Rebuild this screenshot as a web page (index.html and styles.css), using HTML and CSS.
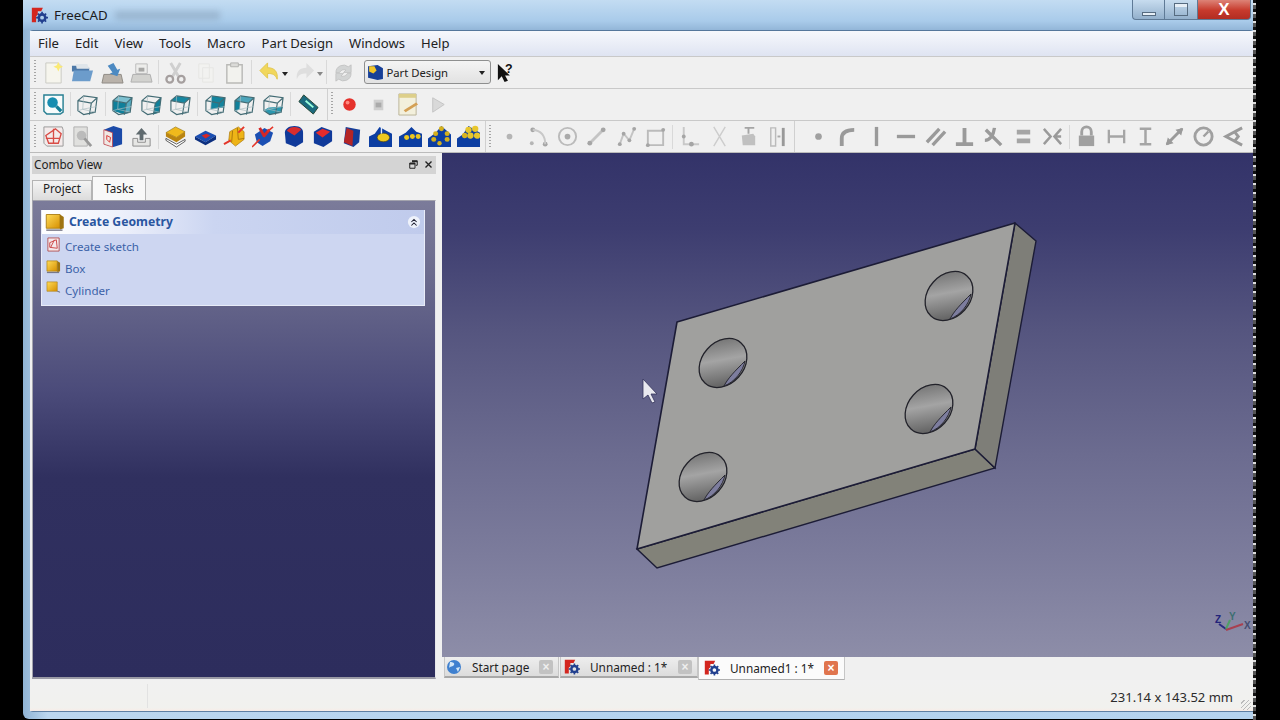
FILE: index.html
```html
<!DOCTYPE html>
<html lang="en">
<head>
<meta charset="utf-8">
<title>FreeCAD</title>
<link rel="stylesheet" href="styles.css">
</head>
<body>
<svg class="sprite" xmlns="http://www.w3.org/2000/svg">
<defs>
<linearGradient id="holeGrad" x1="0" y1="1" x2="1" y2="0">
<stop offset="0" stop-color="#4a4a4a"/><stop offset=".55" stop-color="#a4a4a4"/><stop offset="1" stop-color="#626262"/>
</linearGradient>
<linearGradient id="yel" x1="0" y1="0" x2="1" y2="1"><stop offset="0" stop-color="#ffdc5a"/><stop offset="1" stop-color="#d68f00"/></linearGradient>
<symbol id="fc" viewBox="0 0 20 20"><path d="M1 1h13l-2 4H8v4l-2 2v7H1z" fill="#d3261f"/><circle cx="13" cy="12.500" r="3.800" fill="none" stroke="#22408f" stroke-width="3"/><path d="M13 5.500v2.500M13 17v2.500M6 12.500h2.500M17.500 12.500h2.500M8.200 7.700l1.700 1.700M16.100 15.600l1.700 1.700M17.800 7.700l-1.700 1.700M9.900 15.600l-1.700 1.700" stroke="#22408f" stroke-width="2"/></symbol>
<symbol id="new" viewBox="0 0 24 24"><path d="M4 2h13l3 3v18H4z" fill="#f8f7ec" stroke="#bdbdb5"/><path d="M17 1l1.500 3.500L22 6l-3.500 1.500L17 11l-1.500-3.500L12 6l3.500-1.500z" fill="#ffe84a"/></symbol>
<symbol id="open" viewBox="0 0 24 24"><path d="M1 5h8l2 2h8v4H1z" fill="#4d79a8"/><path d="M5 3h12l2 5H6z" fill="#dfe5ea"/><path d="M1 21l2-11h20l-3 11z" fill="#6c9ccb"/></symbol>
<symbol id="save" viewBox="0 0 24 24"><path d="M3 14h18l2 9H1z" fill="#b9b2aa" stroke="#8e8a84"/><path d="M7 5l6-3 4 7 3-1-3 8-8-3 3-1z" fill="#4d8ac2"/></symbol>
<symbol id="saveas" viewBox="0 0 24 24"><path d="M3 14h18l2 8H1z" fill="#c9c9c4" stroke="#999"/><path d="M6 3h12v10H6z" fill="#ececea" stroke="#aaa"/><path d="M9 7h6v4H9z" fill="#8f8f8c"/></symbol>
<symbol id="cut" viewBox="0 0 24 24"><path d="M7 2l8 14M17 2L9 16" stroke="#c4c4c4" stroke-width="3"/><circle cx="6" cy="19" r="3.500" fill="none" stroke="#8d8584" stroke-width="2.400"/><circle cx="18" cy="19" r="3.500" fill="none" stroke="#8d8584" stroke-width="2.400"/></symbol>
<symbol id="copy" viewBox="0 0 24 24"><path d="M5 3h11v15H5zM9 7h11v15H9z" fill="#f2f2f0" stroke="#e6e6e4"/></symbol>
<symbol id="paste" viewBox="0 0 24 24"><path d="M4 4h16v19H4z" fill="#f3f3ee" stroke="#a8a8a4" stroke-width="1.500"/><path d="M8 2h8v4H8z" fill="#d4d4d0" stroke="#a0a09c"/></symbol>
<symbol id="undo" viewBox="0 0 24 24"><path d="M2 10l8-8v5c7 0 11 4 10 12-2-5-5-6-10-6v5z" fill="#f1d75c" stroke="#e2c74e"/></symbol>
<symbol id="redo" viewBox="0 0 24 24"><path d="M22 10l-8-8v5C7 7 3 11 4 19c2-5 5-6 10-6v5z" fill="#dedede"/></symbol>
<symbol id="caret" viewBox="0 0 8 8"><path d="M1 2h6L4 6z" fill="#222"/></symbol>
<symbol id="caretg" viewBox="0 0 8 8"><path d="M1 2h6L4 6z" fill="#888"/></symbol>
<symbol id="refresh" viewBox="0 0 24 24"><path d="M4 12a8 8 0 0 1 13-6l3-2v8h-8l2.500-2.500A5 5 0 0 0 8 12zM20 13a8 8 0 0 1-13 6l-3 2v-8h8l-2.500 2.500A5 5 0 0 0 16 13z" fill="#d2d4d4" stroke="#b5b5b5" stroke-width=".6"/></symbol>
<symbol id="pd" viewBox="0 0 16 16"><path d="M1 2l9-1 5 3v10l-5 1-9-2z" fill="#173f97"/><path d="M2 2h5l2 4-3 3-4-2z" fill="#f2c528"/></symbol>
<symbol id="help" viewBox="0 0 24 24"><path d="M3 3v17l4-4 3 6 3.500-1.500-3-5.500h5z" fill="#111"/><text x="10.500" y="12" font-size="13" font-weight="700" fill="#111" font-family="Liberation Sans">?</text></symbol>
<symbol id="fit" viewBox="0 0 24 24"><path d="M2 2h20v18l-3 2H5l-3-3z" fill="#f7fbfb" stroke="#277f92" stroke-width="1.500"/><circle cx="11" cy="10" r="5.500" fill="#178db0"/><path d="M15 14l5 5" stroke="#167e97" stroke-width="3.500"/></symbol>
<symbol id="cube" viewBox="0 0 24 24"><path d="M2 8l6-5 14 2-2 15-12 2.500-6-4zM2 8l14 2.500 6-5.500M16 10.500l-2 12" fill="none" stroke="#426b74" stroke-width="1.200"/><path d="M8 3l-1 14-5 1.500M7 17l13 3M7 17l15-3" fill="none" stroke="#a9bcc0" stroke-width=".7"/></symbol>
<symbol id="cfront" viewBox="0 0 24 24"><path d="M2 8l14 2.500-2 12-12-4z" fill="#0f809b"/><path d="M16 10.500l6-5.500-2 15-6 2.500z" fill="#54abc0"/><path d="M2 8l6-5 14 2-6 5.500z" fill="#7cc0d0"/><use href="#cube"/></symbol>
<symbol id="ctop" viewBox="0 0 24 24"><path d="M2 8l6-5 14 2-6 5.500z" fill="#1687a1"/><use href="#cube"/></symbol>
<symbol id="cright" viewBox="0 0 24 24"><path d="M16 10.500l6-5.500-2 15-6 2.500z" fill="#0f809b"/><use href="#cube"/></symbol>
<symbol id="crear" viewBox="0 0 24 24"><path d="M8 3l14 2-1 10-14 2z" fill="#14849e"/><use href="#cube"/></symbol>
<symbol id="cleft" viewBox="0 0 24 24"><path d="M2 8l6-5-1 14-5 2z" fill="#0f809b"/><path d="M8 3l14 2-6 5.500L2 8z" fill="#4ca4ba"/><use href="#cube"/></symbol>
<symbol id="cbottom" viewBox="0 0 24 24"><path d="M2 18l5-3 15-1-2 6-12 2.500z" fill="#2a97ae"/><use href="#cube"/></symbol>
<symbol id="measure" viewBox="0 0 24 24"><path d="M7 2l15 13-5 7L2 9z" fill="#1b6a7e" stroke="#243"/><path d="M9 8l8 7" stroke="#9fd" stroke-width="2"/></symbol>
<symbol id="rec" viewBox="0 0 24 24"><circle cx="12" cy="12" r="6.500" fill="#e5322c"/><circle cx="10" cy="10" r="2" fill="#ff8a80"/></symbol>
<symbol id="stop" viewBox="0 0 24 24"><path d="M7 7h10v11H7z" fill="#cfcfcf"/><path d="M9 10h6v5H9z" fill="#aaa"/></symbol>
<symbol id="macro" viewBox="0 0 24 24"><path d="M3 1h18v22H3z" fill="#f3f0dc" stroke="#bbb49a"/><path d="M3 1h18v4H3z" fill="#ddcf8a"/><path d="M8 18L21 10l2 2-13 8z" fill="#d4a055"/></symbol>
<symbol id="play" viewBox="0 0 24 24"><path d="M7 5l12 7-12 8z" fill="#d9d9d9" stroke="#c4c4c4"/></symbol>
<symbol id="sketch" viewBox="0 0 24 24"><path d="M2 2h19l1 3v17H5l-3-3z" fill="#f3ebeb" stroke="#999"/><path d="M4 11l10-7 6 5-3 10H7zM12 4v15M4 14h14" fill="none" stroke="#d84c46" stroke-width="1.400"/></symbol>
<symbol id="sketch2" viewBox="0 0 24 24"><path d="M3 2h14v20H3z" fill="#e0e0de" stroke="#b0b0b0"/><circle cx="11" cy="11" r="5" fill="#bbb"/><path d="M14 14l7 8" stroke="#999" stroke-width="3"/></symbol>
<symbol id="map" viewBox="0 0 24 24"><path d="M3 5l10-4 9 3v16l-9 3-10-3z" fill="#1b4aa8"/><path d="M3 5l9 3v15l-9-3z" fill="#efe8e4" stroke="#c33" stroke-width=".7"/><path d="M6 11l4 2-1 5-3-3z" fill="none" stroke="#d33"/></symbol>
<symbol id="upload" viewBox="0 0 24 24"><path d="M3 14v8h18v-8h-5v4H8v-4z" fill="#e6e6e4" stroke="#8b8b8b"/><path d="M12 3l6 7h-4v6h-4v-6H6z" fill="#5f6a6e"/></symbol>
<symbol id="pad" viewBox="0 0 24 24"><path d="M2 8l10-6 10 5-9 6z" fill="#f0b91c" stroke="#8a6a08" stroke-width=".6"/><path d="M2 8v4l11 6 9-6V7l-9 6z" fill="#ba8410"/><path d="M2 14l11 6 9-5v2l-9 6-11-7z" fill="#fff" stroke="#333" stroke-width=".8"/></symbol>
<symbol id="pocket" viewBox="0 0 24 24"><path d="M1 12l11-6 11 5-11 7z" fill="#1b4fb3"/><path d="M1 12v3l11 6 11-6v-4l-11 7z" fill="#0c2f7f"/><path d="M8 11l5-2 4 2-5 3z" fill="#d42727"/></symbol>
<symbol id="rev" viewBox="0 0 24 24"><path d="M7 7l9-5 6 5v8l-9 7-7-6z" fill="#eeb416" stroke="#a9780c" stroke-width=".7"/><path d="M15 3l1 12 6-1M10 6l-1 12" fill="none" stroke="#a9780c"/><path d="M1 20l7-4M16 8l6-6" stroke="#e4362a" stroke-width="2"/></symbol>
<symbol id="groove" viewBox="0 0 24 24"><path d="M3 10l10-7 9 5-3 9-8 5-6-4z" fill="#1b4fb3"/><path d="M8 3l5 9M18 5l-6 7" stroke="#d42727" stroke-width="3"/><path d="M0 23l8-8M16 7l6-5" stroke="#e4362a" stroke-width="1.600"/></symbol>
<symbol id="fillet" viewBox="0 0 24 24"><path d="M3 8c0-4 4-7 10-7s9 3 9 7v10l-8 5-10-4z" fill="#103a9a"/><path d="M5 6c2-3 5-4 8-4s6 1 7 3l-7 6z" fill="#d92d2d"/></symbol>
<symbol id="chamfer" viewBox="0 0 24 24"><path d="M3 7l8-5 11 4v11l-9 6-10-4z" fill="#103a9a"/><path d="M5 8l7-4 8 3-8 6z" fill="#e62b2b"/></symbol>
<symbol id="draft" viewBox="0 0 24 24"><path d="M6 2l15 3-1 13-6 5-10-4z" fill="#143d98"/><path d="M7 3l7 3-1 16-9-4z" fill="#b52525"/></symbol>
<symbol id="mirror" viewBox="0 0 24 24"><path d="M0 12l6-3 5-7 7 4 6 3v14H0z" fill="#0c3ea2"/><ellipse cx="15" cy="13" rx="6.500" ry="4.500" fill="#ecc81f" stroke="#4a4010" stroke-width=".7"/><path d="M13 2v7" stroke="#e8eef8" stroke-width="1.400"/></symbol>
<symbol id="lin" viewBox="0 0 24 24"><path d="M0 12l7-4 6-6 5 5 6 2v14H0z" fill="#0c3ea2"/><circle cx="8" cy="13" r="2.600" fill="#ecc81f"/><circle cx="14" cy="12" r="2.600" fill="#ecc81f"/><circle cx="20" cy="12" r="2.600" fill="#ecc81f"/></symbol>
<symbol id="polar" viewBox="0 0 24 24"><path d="M0 14l8-6 6-7 10 9v13H0z" fill="#0c3ea2"/><circle cx="14" cy="4" r="2.600" fill="#d4b01c"/><circle cx="8" cy="9" r="2.600" fill="#d4b01c"/><circle cx="20" cy="9" r="2.600" fill="#d4b01c"/><circle cx="6" cy="15" r="2.600" fill="#d4b01c"/><circle cx="20" cy="15" r="2.600" fill="#d4b01c"/><circle cx="12" cy="19" r="2.300" fill="#d4b01c"/></symbol>
<symbol id="multi" viewBox="0 0 24 24"><path d="M0 14l6-4 6-9 12 7v15H0z" fill="#0c3ea2"/><circle cx="12" cy="5" r="3.300" fill="#e8c62c"/><circle cx="19" cy="4" r="3.300" fill="#e8c62c"/><circle cx="21" cy="11" r="3.300" fill="#e8c62c"/><circle cx="14" cy="11" r="3.300" fill="#e8c62c"/><circle cx="8" cy="11" r="2.800" fill="#d9b420"/></symbol>
<symbol id="gpoint" viewBox="0 0 24 24"><circle cx="12" cy="12" r="3" fill="#b5b5b5"/></symbol>
<symbol id="gfillet" viewBox="0 0 24 24"><circle cx="6" cy="5" r="2.500" fill="#a5a5a5"/><circle cx="19" cy="20" r="2.500" fill="#a5a5a5"/><circle cx="5" cy="19" r="2" fill="#b5b5b5"/><path d="M6 5c9 1 13 6 13 15" fill="none" stroke="#c8c8c8" stroke-width="2"/></symbol>
<symbol id="gcircle" viewBox="0 0 24 24"><circle cx="12" cy="12" r="9" fill="none" stroke="#bbb" stroke-width="2"/><circle cx="12" cy="12" r="3" fill="#aaa"/></symbol>
<symbol id="gline" viewBox="0 0 24 24"><path d="M5 19L19 5" stroke="#c4c4c4" stroke-width="3"/><circle cx="5" cy="19" r="2.500" fill="#a5a5a5"/><circle cx="19" cy="5" r="2.500" fill="#a5a5a5"/></symbol>
<symbol id="gpoly" viewBox="0 0 24 24"><path d="M5 20l4-11 6 7 5-12" fill="none" stroke="#c4c4c4" stroke-width="2"/><circle cx="5" cy="20" r="2" fill="#a5a5a5"/><circle cx="9" cy="9" r="2" fill="#a5a5a5"/><circle cx="15" cy="16" r="2" fill="#a5a5a5"/><circle cx="20" cy="4" r="2" fill="#a5a5a5"/></symbol>
<symbol id="grect" viewBox="0 0 24 24"><path d="M4 6h16v15H4z" fill="none" stroke="#bbb" stroke-width="2"/><circle cx="4" cy="21" r="2" fill="#a5a5a5"/><circle cx="20" cy="5" r="2" fill="#a5a5a5"/></symbol>
<symbol id="gcorner" viewBox="0 0 24 24"><path d="M6 2v18h16" fill="none" stroke="#c8c8c8" stroke-width="2"/><circle cx="6" cy="12" r="2" fill="#a5a5a5"/><circle cx="14" cy="20" r="2.500" fill="#a5a5a5"/></symbol>
<symbol id="gtrim" viewBox="0 0 24 24"><path d="M6 2l12 20M18 2L6 22" stroke="#cdcdcd" stroke-width="1.500"/></symbol>
<symbol id="gext" viewBox="0 0 24 24"><path d="M5 11l12-2 2 3v9H6z" fill="#c0c0c0"/><path d="M12 9V3M8 3h10" stroke="#a5a5a5" stroke-width="2"/></symbol>
<symbol id="gsym" viewBox="0 0 24 24"><path d="M5 3v19h5V3z" fill="none" stroke="#bbb" stroke-width="1.500"/><path d="M18 3v19" stroke="#999" stroke-width="3"/><path d="M12 12h3" stroke="#aaa" stroke-width="2"/></symbol>
<symbol id="kpoint" viewBox="0 0 24 24"><circle cx="12" cy="12" r="3.500" fill="#a0a0a0"/></symbol>
<symbol id="karc" viewBox="0 0 24 24"><path d="M6 22v-8c0-6 4-9 13-9" fill="none" stroke="#9a9a9a" stroke-width="4"/></symbol>
<symbol id="kvert" viewBox="0 0 24 24"><path d="M12 2v20" stroke="#9a9a9a" stroke-width="3.500"/></symbol>
<symbol id="khoriz" viewBox="0 0 24 24"><path d="M3 12h19" stroke="#9a9a9a" stroke-width="3.500"/></symbol>
<symbol id="kpar" viewBox="0 0 24 24"><path d="M3 18L16 4M9 21L22 7" stroke="#9a9a9a" stroke-width="3.500"/></symbol>
<symbol id="kperp" viewBox="0 0 24 24"><path d="M12 3v17M3 20h18" stroke="#9a9a9a" stroke-width="4"/></symbol>
<symbol id="ktan" viewBox="0 0 24 24"><path d="M4 5l16 16M3 16c5 0 9-5 10-13" fill="none" stroke="#9a9a9a" stroke-width="3.500"/></symbol>
<symbol id="keq" viewBox="0 0 24 24"><path d="M5 5h14v5H5zM5 14h14v5H5z" fill="#a5a5a5"/></symbol>
<symbol id="ksym" viewBox="0 0 24 24"><path d="M3 4l7 8-7 8M21 4l-7 8 7 8M14 12h7" fill="none" stroke="#9a9a9a" stroke-width="2.600"/></symbol>
<symbol id="klock" viewBox="0 0 24 24"><path d="M4 11h16v11H4z" fill="#a0a0a0"/><path d="M7 11V7a5 5 0 0 1 10 0v4" fill="none" stroke="#a0a0a0" stroke-width="3"/></symbol>
<symbol id="kh" viewBox="0 0 24 24"><path d="M4 5v14M20 5v14M4 12h16" stroke="#a5a5a5" stroke-width="2.400"/></symbol>
<symbol id="kv" viewBox="0 0 24 24"><path d="M6 4h12M6 20h12M12 4v16" stroke="#a5a5a5" stroke-width="2.600"/></symbol>
<symbol id="kdist" viewBox="0 0 24 24"><path d="M4 20L20 4" stroke="#9a9a9a" stroke-width="3"/><path d="M3 21l2-8 6 6zM21 3l-2 8-6-6z" fill="#9a9a9a"/></symbol>
<symbol id="kradius" viewBox="0 0 24 24"><circle cx="12" cy="12" r="9" fill="none" stroke="#a0a0a0" stroke-width="3"/><path d="M12 12l5-5" stroke="#a0a0a0" stroke-width="2.500"/></symbol>
<symbol id="kangle" viewBox="0 0 24 24"><path d="M21 3L4 12l17 9M13 7l4 5-4 5" fill="none" stroke="#9a9a9a" stroke-width="3"/></symbol>
<symbol id="box" viewBox="0 0 16 16"><path d="M1 2h11v11H1z" fill="url(#yel)" stroke="#a87a10" stroke-width=".7"/><path d="M12 2l3 2v9l-3 1z" fill="#9f7410"/><path d="M1 14.500h13" stroke="#667" stroke-width="1"/></symbol>
<symbol id="cyl" viewBox="0 0 16 16"><path d="M1 2h11v10H1z" fill="url(#yel)" stroke="#a87a10" stroke-width=".6"/><path d="M12 12l3 1" stroke="#667"/></symbol>
<symbol id="csk" viewBox="0 0 16 16"><path d="M2 1h12v14H2z" fill="#f4e8ea" stroke="#a33" stroke-width=".8"/><path d="M4 6l7-3 1 9-8-1zM9 3L5 11" fill="none" stroke="#cc4444"/></symbol>
<symbol id="globe" viewBox="0 0 16 16"><circle cx="8" cy="8" r="7" fill="#3f80cf"/><path d="M4 3c3 0 5 1 4 3S4 7 3 9zM10 9l4-1-2 5z" fill="#d3e7f7"/></symbol>
<symbol id="collapse" viewBox="0 0 16 16"><circle cx="8" cy="8" r="7" fill="#eef2fb"/><path d="M5 8l3-3 3 3M5 12l3-3 3 3" fill="none" stroke="#223" stroke-width="1.200"/></symbol>
<symbol id="float" viewBox="0 0 12 12"><path d="M4 1h7v6H9M1 4h7v7H1z" fill="none" stroke="#222" stroke-width="1.300"/><path d="M4 1h7v2H4zM1 4h7v2H1z" fill="#222"/></symbol>
<symbol id="closex" viewBox="0 0 12 12"><path d="M2 2l8 8M10 2l-8 8" stroke="#222" stroke-width="1.800"/></symbol>
</defs>
</svg>

<div class="shell">
  <div class="window">
    <header class="titlebar">
      <svg class="ti"><use href="#fc"/></svg>
      <span class="ttext">FreeCAD</span>
      <span class="smudge"></span>
      <div class="wbtns">
        <span class="wb min"><i></i></span>
        <span class="wb max"><i></i></span>
        <span class="wb cls">X</span>
      </div>
    </header>
    <div class="client">
      <nav class="menubar">
        <span>File</span><span>Edit</span><span>View</span><span>Tools</span><span>Macro</span><span>Part Design</span><span>Windows</span><span>Help</span>
      </nav>
      <div class="toolbar">
        <i class="grip"></i>
        <b class="t f"><svg><use href="#new"/></svg></b>
        <b class="t"><svg><use href="#open"/></svg></b>
        <b class="t"><svg><use href="#save"/></svg></b>
        <b class="t f"><svg><use href="#saveas"/></svg></b>
        <i class="sep"></i>
        <b class="t f"><svg><use href="#cut"/></svg></b>
        <b class="t"><svg><use href="#copy"/></svg></b>
        <b class="t f"><svg><use href="#paste"/></svg></b>
        <i class="sep"></i>
        <b class="t u"><svg><use href="#undo"/></svg></b><svg class="car"><use href="#caret"/></svg>
        <b class="t u"><svg><use href="#redo"/></svg></b><svg class="car"><use href="#caretg"/></svg>
        <i class="sep s2"></i>
        <b class="t"><svg><use href="#refresh"/></svg></b>
        <div class="combo"><svg><use href="#pd"/></svg><span>Part Design</span><svg class="car c2"><use href="#caret"/></svg></div>
        <b class="t"><svg><use href="#help"/></svg></b>
      </div>
      <div class="toolbar">
        <i class="grip"></i>
        <b class="t"><svg><use href="#fit"/></svg></b>
        <i class="sep"></i>
        <b class="t"><svg><use href="#cube"/></svg></b>
        <i class="sep"></i>
        <b class="t"><svg><use href="#cfront"/></svg></b>
        <b class="t"><svg><use href="#cright"/></svg></b>
        <b class="t"><svg><use href="#ctop"/></svg></b>
        <i class="sep"></i>
        <b class="t"><svg><use href="#crear"/></svg></b>
        <b class="t"><svg><use href="#cleft"/></svg></b>
        <b class="t"><svg><use href="#cbottom"/></svg></b>
        <i class="sep"></i>
        <b class="t"><svg><use href="#measure"/></svg></b>
        <i class="brk b1"></i><i class="grip g2"></i>
        <b class="t"><svg><use href="#rec"/></svg></b>
        <b class="t"><svg><use href="#stop"/></svg></b>
        <b class="t"><svg><use href="#macro"/></svg></b>
        <b class="t"><svg><use href="#play"/></svg></b>
      </div>
      <div class="toolbar last">
        <i class="grip"></i>
        <b class="t"><svg><use href="#sketch"/></svg></b>
        <b class="t"><svg><use href="#sketch2"/></svg></b>
        <b class="t"><svg><use href="#map"/></svg></b>
        <b class="t"><svg><use href="#upload"/></svg></b>
        <i class="sep"></i>
        <b class="t"><svg><use href="#pad"/></svg></b>
        <b class="t"><svg><use href="#pocket"/></svg></b>
        <b class="t"><svg><use href="#rev"/></svg></b>
        <b class="t"><svg><use href="#groove"/></svg></b>
        <b class="t"><svg><use href="#fillet"/></svg></b>
        <b class="t"><svg><use href="#chamfer"/></svg></b>
        <b class="t"><svg><use href="#draft"/></svg></b>
        <b class="t"><svg><use href="#mirror"/></svg></b>
        <b class="t"><svg><use href="#lin"/></svg></b>
        <b class="t"><svg><use href="#polar"/></svg></b>
        <b class="t"><svg><use href="#multi"/></svg></b>
        <i class="brk"></i><i class="grip g3"></i>
        <b class="t"><svg><use href="#gpoint"/></svg></b>
        <b class="t"><svg><use href="#gfillet"/></svg></b>
        <b class="t"><svg><use href="#gcircle"/></svg></b>
        <b class="t"><svg><use href="#gline"/></svg></b>
        <b class="t"><svg><use href="#gpoly"/></svg></b>
        <b class="t"><svg><use href="#grect"/></svg></b>
        <i class="sep"></i>
        <b class="t"><svg><use href="#gcorner"/></svg></b>
        <b class="t"><svg><use href="#gtrim"/></svg></b>
        <b class="t"><svg><use href="#gext"/></svg></b>
        <b class="t"><svg><use href="#gsym"/></svg></b>
        <i class="brk b3"></i>
        <b class="t"><svg><use href="#kpoint"/></svg></b>
        <b class="t"><svg><use href="#karc"/></svg></b>
        <b class="t"><svg><use href="#kvert"/></svg></b>
        <b class="t"><svg><use href="#khoriz"/></svg></b>
        <b class="t"><svg><use href="#kpar"/></svg></b>
        <b class="t"><svg><use href="#kperp"/></svg></b>
        <b class="t"><svg><use href="#ktan"/></svg></b>
        <b class="t"><svg><use href="#keq"/></svg></b>
        <b class="t"><svg><use href="#ksym"/></svg></b>
        <i class="sep"></i>
        <b class="t"><svg><use href="#klock"/></svg></b>
        <b class="t"><svg><use href="#kh"/></svg></b>
        <b class="t"><svg><use href="#kv"/></svg></b>
        <b class="t"><svg><use href="#kdist"/></svg></b>
        <b class="t"><svg><use href="#kradius"/></svg></b>
        <b class="t"><svg><use href="#kangle"/></svg></b>
      </div>
      <div class="main">
        <aside class="dock">
          <div class="dtitle"><span>Combo View</span><svg class="float"><use href="#float"/></svg><svg class="dx"><use href="#closex"/></svg></div>
          <div class="dtabs"><span class="dtab">Project</span><span class="dtab on">Tasks</span></div>
          <div class="dpanel">
            <section class="task">
              <div class="thead"><svg class="tbig"><use href="#box"/></svg><strong>Create Geometry</strong><svg class="tcol"><use href="#collapse"/></svg></div>
              <ul class="tlist">
                <li><svg><use href="#csk"/></svg><span>Create sketch</span></li>
                <li><svg><use href="#box"/></svg><span>Box</span></li>
                <li><svg><use href="#cyl"/></svg><span>Cylinder</span></li>
              </ul>
            </section>
          </div>
        </aside>
        <div class="central">
          <div class="viewer">
            <svg class="scene" viewBox="442 152 811 504" xmlns="http://www.w3.org/2000/svg">
              <defs>
                <symbol id="hole" overflow="visible">
                  <g transform="rotate(-48)"><ellipse rx="27" ry="21" fill="url(#holeGrad)" stroke="#22222a" stroke-width="1.300"/></g>
                  <path d="M1 23C5 15 12 8 22-2 20 8 12 19 1 23z" fill="#7d7d9e" stroke="#2a2a33" stroke-width="1"/>
                </symbol>
              </defs>
              <path d="M637 548L975 448 995 467 657 567z" fill="#828279" stroke="#1c1c36" stroke-width="1.400"/>
              <path d="M1015 222L1036 240 995 467 975 448z" fill="#7e7e78" stroke="#1c1c36" stroke-width="1.400"/>
              <path d="M677 321L1015 222 975 448 637 548z" fill="#a0a09e" stroke="#1c1c36" stroke-width="1.600" stroke-linejoin="round"/>
              <use href="#hole" x="723" y="362"/>
              <use href="#hole" x="949" y="295"/>
              <use href="#hole" x="929" y="408"/>
              <use href="#hole" x="703" y="476"/>
              <path d="M643 378v20l5-4 4 8 3-1-4-8h6z" fill="#e9e9ef" stroke="#34345a" stroke-width=".8"/>
              <path d="M1226 628l-7-5" stroke="#2a2a80" stroke-width="2"/>
              <path d="M1226 628l4-9" stroke="#4f9f66" stroke-width="2"/>
              <path d="M1226 629l17-6" stroke="#a84050" stroke-width="2"/>
              <text x="1215" y="622" class="ax zc">Z</text>
              <text x="1229" y="619" class="ax yc">Y</text>
              <text x="1244" y="628" class="ax xc">X</text>
            </svg>
          </div>
          <div class="mdi">
            <div class="mtab t1"><svg><use href="#globe"/></svg><span>Start page</span><i class="mx">×</i></div>
            <div class="mtab t2"><svg><use href="#fc"/></svg><span>Unnamed : 1*</span><i class="mx">×</i></div>
            <div class="mtab active"><svg><use href="#fc"/></svg><span>Unnamed1 : 1*</span><i class="mx red">×</i></div>
          </div>
        </div>
      </div>
      <footer class="status">
        <i class="sline"></i>
        <span class="dims">231.14 x 143.52 mm</span>
        <i class="sgrip"></i>
      </footer>
    </div>
  </div>
  <div class="noise"></div>
</div>
</body>
</html>
```
FILE: styles.css
```css
* { box-sizing: border-box; }
html, body { margin: 0; padding: 0; }
body { width: 1280px; height: 720px; overflow: hidden; background: #000; font-family: "Noto Sans", "Open Sans", sans-serif; color: #222; }
.sprite { width: 0; height: 0; position: absolute; }
.shell { display: flex; height: 720px; padding-left: 23px; }
.window { width: 1230px; height: 719px; display: flex; flex-direction: column; border-radius: 0 0 0 6px; background: linear-gradient(90deg, #8fb3d4 0, #bcd6ee 2%, #b3d2ef 60%, #b6d3ee 100%); }
.noise { width: 3px; height: 720px; background: repeating-linear-gradient(180deg, #111 0, #111 3px, #ddd 3px, #ddd 5px, #555 5px, #555 9px); }

.titlebar { height: 30px; display: flex; align-items: center; padding-left: 8px; position: relative; flex: none; background: linear-gradient(180deg, #c3dcf2 0, #a9cbea 70%, #93b6d8 100%); }
.ti { width: 17px; height: 17px; flex: none; }
.ttext { font-size: 13.3px; margin-left: 6px; color: #1c1c1c; }
.smudge { width: 105px; height: 9px; margin-left: 7px; background: #8fa9c2; opacity: .65; filter: blur(3px); }
.wbtns { display: flex; margin-left: auto; align-self: flex-start; margin-right: 2px; height: 20px; }
.wb { display: flex; align-items: center; justify-content: center; border: 1px solid #5f7a96; border-top: 0; }
.min { width: 32px; border-radius: 0 0 0 4px; background: linear-gradient(#c7dcef, #93b0cc); border-right: 0; }
.min i { width: 14px; height: 4px; border: 1px solid #566b80; background: #e6eef6; margin-top: 8px; }
.max { width: 33px; background: linear-gradient(#c7dcef, #93b0cc); border-right: 0; }
.max i { width: 14px; height: 13px; border: 1px solid #566b80; box-shadow: inset 0 3px 0 #e6eef6; }
.cls { width: 54px; border-radius: 0 0 4px 0; color: #fff; font: 700 17px "Liberation Sans", sans-serif; background: linear-gradient(#dd8377, #c73a2c 55%, #b22d22); }

.client { flex: 1; min-height: 0; margin: 0 0 7px 7px; display: flex; flex-direction: column; background: #f0f0f0; border-top: 1px solid #55779b; border-bottom: 1px solid #5f7fa3; border-radius: 3px 3px 0 3px; }
.menubar { height: 25px; flex: none; display: flex; gap: 16px; align-items: center; padding: 0 0 1px 8px; font-size: 13.1px; background: linear-gradient(180deg, #f6f8fc 0, #dfe4f2 100%); }
.toolbar { height: 32px; flex: none; display: flex; align-items: center; padding: 0 0 1px 4px; background: #f0f0f0; border-top: 1px solid #c9c9c9; }
.toolbar.last { height: 33px; padding-bottom: 0; border-bottom: 1px solid #bbb; }
.grip { width: 2px; height: 24px; flex: none; margin-right: 3px; background: repeating-linear-gradient(180deg, #a5a5a5 0, #a5a5a5 1px, transparent 1px, transparent 3px); }
.t { width: 29.3px; height: 26px; flex: none; display: flex; align-items: center; justify-content: center; }
.t svg { width: 23px; height: 23px; }
.t.f svg { opacity: .75; }
.sep { width: 1px; height: 24px; flex: none; margin: 0 2px; background: #d9d9d9; }
.t.u { width: 23px; margin-left: 4px; }
.car { width: 8px; height: 8px; flex: none; margin: 4px 0 0 0; }
.s2 { margin: 0 2px; }
.combo { width: 127px; height: 24px; flex: none; margin-left: 6px; display: flex; align-items: center; padding-left: 2px; font-size: 11.3px; border: 1px solid #8e8f8f; border-radius: 3px; background: linear-gradient(#f4f4f4, #e2e2e2); }
.combo svg { width: 17px; height: 17px; flex: none; margin-right: 2px; }
.combo .c2 { width: 8px; height: 8px; margin: 2px 4px 0 auto; }
.brk { width: 1px; height: 31px; flex: none; margin-left: 2px; background: #d0d0d0; }
.brk.b1 { margin-left: 4px; }
.grip.g2 { margin: 0 2px 0 3px; }
.grip.g3 { margin: 0 3px 0 3px; }
.brk.b3 { margin: 0 8px 0 2px; }

.main { flex: 1; min-height: 0; display: flex; gap: 6px; }
.dock { width: 406px; flex: none; display: flex; flex-direction: column; padding: 3px 0 1px 2px; }
.dtitle { height: 18px; flex: none; display: flex; align-items: center; padding: 0 0 2px 2px; background: #d4d4d4; font-size: 11.7px; }
.float { width: 9px; height: 9px; margin-left: auto; margin-right: 6px; }
.dx { width: 9px; height: 9px; margin-right: 3px; }
.dtabs { height: 26px; flex: none; display: flex; align-items: flex-end; }
.dtab { width: 60px; height: 20px; display: flex; align-items: center; justify-content: center; padding-bottom: 5px; font-size: 11.7px; background: linear-gradient(#f4f4f4, #dcdcdc); border: 1px solid #b4b4b4; border-bottom: 0; }
.dtab.on { width: 54px; height: 24px; background: #f8f8f8; padding-bottom: 2px; }
.dpanel { flex: 1; min-height: 0; padding: 9px 10px 0 8px; border: 1px solid #a3a3ad; border-bottom: 2px solid #9a9aa5; border-right-color: #e6e6ea; background: linear-gradient(180deg, #7b7b9a 0, #6c6c8e 15%, #4b4b7a 40%, #30305f 58%, #2d2d5d 100%); }
.task { height: 96px; background: #cdd6f1; border: 1px solid #e8ecf8; border-top: 0; display: flex; flex-direction: column; }
.thead { height: 24px; flex: none; display: flex; align-items: center; padding: 0 0 1px 3px; background: linear-gradient(90deg, #fff 0, #eef1fb 20%, #cbd5f1 45%, #c0cbec 100%); color: #2a56a0; font-size: 12.2px; }
.tbig { width: 20px; height: 20px; flex: none; margin-right: 4px; }
.thead strong { font-weight: 700; }
.tcol { width: 14px; height: 14px; margin-left: auto; margin-right: 3px; }
.tlist { list-style: none; margin: 0; padding: 2px 0 0 4px; }
.tlist li { height: 21.7px; display: flex; align-items: center; font-size: 11.6px; color: #3b62a8; }
.tlist svg { width: 15px; height: 15px; flex: none; margin: -5px 4px 0 0; }

.central { flex: 1; min-width: 0; display: flex; flex-direction: column; }
.viewer { height: 504px; flex: none; position: relative; background: linear-gradient(180deg, #333369 0, #3d3d70 15%, #55557f 35%, #6c6c90 60%, #7c7c9c 80%, #8d8da8 100%); }
.scene { position: absolute; inset: 0; width: 100%; height: 100%; }
.ax { font: 700 10px "Liberation Sans", sans-serif; }
.zc { fill: #23237a; }
.yc { fill: #3c6f70; }
.xc { fill: #444c70; }
.mdi { height: 24px; flex: none; display: flex; align-items: flex-start; padding-left: 2px; font-size: 11.8px; }
.mtab { width: 115px; height: 21px; display: flex; align-items: center; padding-left: 3px; background: linear-gradient(#eee, #dcdcdc); border: 1px solid #c6c6c6; border-top: 0; border-bottom: 2px solid #a8a8a8; }
.mtab svg { width: 16px; height: 16px; flex: none; margin-right: 10px; }
.t1 { padding-left: 1px; }
.t2 { width: 138px; margin-left: 1px; }
.active { width: 147px; height: 24px; padding: 0 0 1px 5px; background: #fbfbfb; border-bottom: 2px solid #b0b0b0; }
.mx { width: 14px; height: 14px; flex: none; margin-left: auto; margin-right: 5px; display: flex; align-items: center; justify-content: center; font: 700 12px "Liberation Sans", sans-serif; border-radius: 2px; color: #eee; background: #c2c2c2; }
.mx.red { background: #e0754e; color: #fff; margin-right: 6px; }
.status { height: 31px; flex: none; display: flex; align-items: center; position: relative; background: linear-gradient(#f1f1f1, #f1f1ee 90%, #f8ece6); }
.sline { width: 1px; height: 24px; margin-left: 117px; background: #e2e2e2; }
.dims { margin-left: auto; margin-right: 20px; font-size: 13px; color: #2b2b2b; margin-top: 2px; }
.sgrip { position: absolute; right: 2px; bottom: 1px; width: 10px; height: 10px; background: repeating-linear-gradient(135deg, transparent 0, transparent 2px, #bbb 2px, #bbb 3px); }
```
